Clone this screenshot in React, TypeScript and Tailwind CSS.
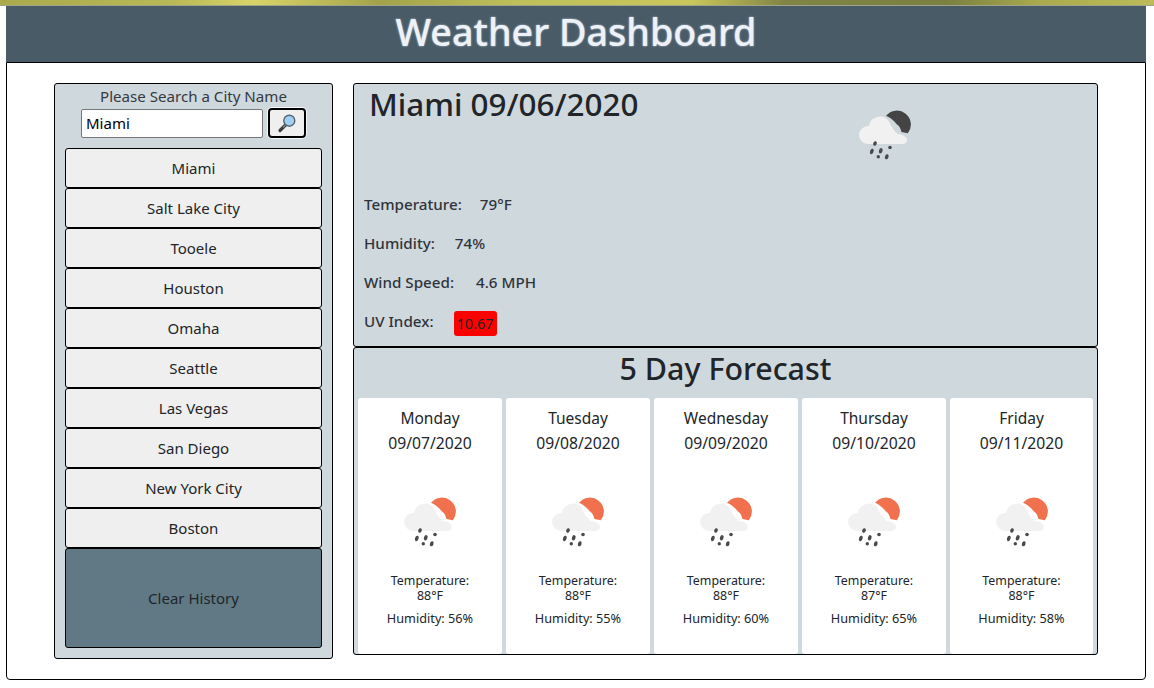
const cities = ['Miami', 'Salt Lake City', 'Tooele', 'Houston', 'Omaha', 'Seattle', 'Las Vegas', 'San Diego', 'New York City', 'Boston'];

const forecast = [
  { day: 'Monday', date: '09/07/2020', temp: '88', humidity: '56' },
  { day: 'Tuesday', date: '09/08/2020', temp: '88', humidity: '55' },
  { day: 'Wednesday', date: '09/09/2020', temp: '88', humidity: '60' },
  { day: 'Thursday', date: '09/10/2020', temp: '87', humidity: '65' },
  { day: 'Friday', date: '09/11/2020', temp: '88', humidity: '58' },
];

function WeatherIcon({ sun }: { sun: string }) {
  return (
    <svg width="54" height="54" viewBox="0 0 54 54" className="block">
      <path d="M28 7.800 A13.500 13.500 0 1 1 49.800 25.300 L43.500 24 C42.500 20.500 41.500 18 39 16.500 C36 12.500 32 9.500 28 7.800 Z" fill={sun} />
      <path d="M10 36 A9 9 0 0 1 10 18 L11 18 A11 11 0 0 1 31 13.500 C33 17.500 35 22 40 26 C45 26.500 49 29 49 32 C49 34.500 47 36 44 36 Z" fill="#f1f1f1" />
      <g fill="#4a4a4a">
        <ellipse cx="17" cy="35.500" rx="1.800" ry="2.300" transform="rotate(20 17 35.500)" />
        <ellipse cx="13.800" cy="43.500" rx="1.800" ry="2.800" transform="rotate(20 13.800 43.500)" />
        <ellipse cx="22.700" cy="42.800" rx="1.800" ry="2.800" transform="rotate(20 22.700 42.800)" />
        <ellipse cx="32" cy="39.500" rx="1.800" ry="1.800" />
        <ellipse cx="20.300" cy="48.800" rx="1.700" ry="1.700" />
        <ellipse cx="28.700" cy="48.800" rx="1.800" ry="2.600" transform="rotate(20 28.700 48.800)" />
      </g>
    </svg>
  );
}

function SearchIcon() {
  return (
    <svg width="20" height="20" viewBox="0 0 20 20">
      <path d="M8.500 12 L3 17.500" stroke="#3d3d3d" strokeWidth="3.200" strokeLinecap="round" />
      <path d="M8.500 12 L6 14.500" stroke="#8a8f94" strokeWidth="1.200" />
      <circle cx="12.300" cy="7.700" r="5.500" fill="#9fd0f3" stroke="#55636e" strokeWidth="1.400" />
    </svg>
  );
}

function ForecastCard({ item }: { item: (typeof forecast)[number] }) {
  return (
    <div className="bg-white rounded-[3px] flex flex-col items-center text-[#212529]">
      <div className="text-[15.500px] leading-6 mt-[8px]">{item.day}</div>
      <div className="text-[15.700px] leading-6 mt-[1px]">{item.date}</div>
      <div className="mt-[40px]"><WeatherIcon sun="#f1704e" /></div>
      <div className="text-[12.400px] leading-[15px] mt-[24px] text-center">Temperature:<br />{item.temp}°F</div>
      <div className="text-[12.700px] leading-[15px] mt-[8px]">Humidity: {item.humidity}%</div>
    </div>
  );
}

export default function App() {
  return (
    <div className="w-[1154px] h-[688px] bg-white overflow-hidden font-['Noto_Sans',sans-serif] text-[#212529]">
      <div className="h-[6px] border-b border-[#a3a38c] bg-[linear-gradient(90deg,#a9aa4c_0%,#b8b856_15%,#d9d468_22%,#a2a24a_33%,#bfc05a_45%,#c9c65a_60%,#808545_68%,#7a8040_82%,#a9aa4d_90%,#bdbb58_100%)]" />
      <div className="mx-[6px] w-[1140px]">
        <header className="h-[56px] bg-[#485b66] flex items-center justify-center">
          <h1 className="text-[37.700px] font-medium leading-none text-[#eef1f6] -mt-[5px] [text-shadow:0_0_2px_#c9d9ea]">Weather Dashboard</h1>
        </header>
        <div className="h-[618px] border border-black rounded-b-[4px] pt-[20px] pl-[47px] flex gap-[20px] items-start">
          <aside className="w-[279px] h-[576px] bg-[#cfd8dd] border border-black rounded-[3px] px-[10px] flex flex-col items-center">
            <div className="text-[15.100px] leading-[22px] mt-[1px] text-[#343a40]">Please Search a City Name</div>
            <div className="flex items-center gap-[5px] h-[32px]">
              <input
                readOnly
                value="Miami"
                className="w-[182px] h-[29px] bg-white border border-[#767676] rounded-[2px] px-[4px] text-[15px] text-black outline-none"
              />
              <button className="w-[38px] h-[30px] bg-[#efefef] border-2 border-black rounded-[4px] flex items-center justify-center shadow-[0_0_0_1px_#f5f7f8]">
                <SearchIcon />
              </button>
            </div>
            <div className="w-full mt-[9px] flex flex-col">
              {cities.map((city) => (
                <button key={city} className="h-[40px] bg-[#efefef] border border-black rounded-[3px] text-[15px] text-[#212529]">
                  {city}
                </button>
              ))}
              <button className="h-[100px] bg-[#607985] border border-black rounded-[3px] text-[15px] text-[#212529]">
                Clear History
              </button>
            </div>
          </aside>
          <main className="w-[745px] flex flex-col">
            <section className="h-[264px] bg-[#cfd8dd] border border-black rounded-[3px]">
              <div className="flex items-start">
                <h2 className="text-[31.400px] font-medium leading-[40px] pl-[15px] w-[504px]">Miami 09/06/2020</h2>
                <div className="mt-[24px]"><WeatherIcon sun="#444444" /></div>
              </div>
              <div className="pl-[10px] mt-[23px] text-[15.200px] font-medium text-[#2f343a]">
                <div className="flex h-[39px] items-center gap-[18px]"><span>Temperature:</span><span>79°F</span></div>
                <div className="flex h-[39px] items-center gap-[20px]"><span>Humidity:</span><span>74%</span></div>
                <div className="flex h-[39px] items-center gap-[22px]"><span>Wind Speed:</span><span>4.6 MPH</span></div>
                <div className="flex h-[39px] items-center gap-[20px]">
                  <span>UV Index:</span>
                  <span className="bg-[#ff0000] rounded-[3px] h-[25px] w-[43px] mt-[4px] flex items-center justify-center font-normal text-[14.500px] text-[#212529]">10.67</span>
                </div>
              </div>
            </section>
            <section className="h-[308px] bg-[#cfd8dd] border border-black rounded-[3px] flex flex-col">
              <h2 className="text-[30.400px] font-medium leading-[40px] text-center h-[50px] pt-[1px]">5 Day Forecast</h2>
              <div className="flex-1 grid grid-cols-[144px_144px_144px_144px_143px] gap-[4px] px-[4px]">
                {forecast.map((item) => (
                  <ForecastCard key={item.day} item={item} />
                ))}
              </div>
            </section>
          </main>
        </div>
      </div>
    </div>
  );
}
